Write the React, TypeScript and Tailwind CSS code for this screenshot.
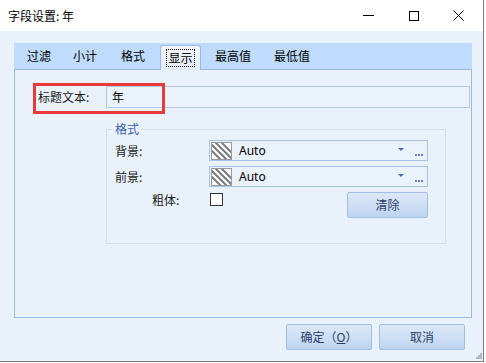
import React from 'react';

const font = { fontFamily: '"Noto Sans CJK SC", "Noto Sans", sans-serif' };

function Swatch() {
  return (
    <svg width="21" height="18" viewBox="0 0 21 18" className="shrink-0">
      <defs>
        <clipPath id="sw">
          <rect x="1" y="1" width="19" height="16" />
        </clipPath>
      </defs>
      <rect x="0.5" y="0.5" width="20" height="17" fill="#fff" stroke="#9a9a9a" />
      <g clipPath="url(#sw)" stroke="#7a7a7a" strokeWidth="2">
        <line x1="-8" y1="0" x2="10" y2="18" />
        <line x1="-2" y1="0" x2="16" y2="18" />
        <line x1="4" y1="0" x2="22" y2="18" />
        <line x1="10" y1="0" x2="28" y2="18" />
      </g>
    </svg>
  );
}

function ColorCombo() {
  return (
    <div className="w-[219px] h-[21px] border border-[#a9c3e8] bg-[#eaf2fb] flex items-center pl-[1px] pr-[4px]">
      <Swatch />
      <span className="ml-[7px] text-[12px] text-black leading-none" style={{ fontFamily: '"Noto Sans", sans-serif' }}>
        Auto
      </span>
      <svg width="6" height="3" viewBox="0 0 6 3" className="ml-auto mr-[11px] mb-[3px]">
        <path d="M0 0h6L3 3z" fill="#4d6ea8" />
      </svg>
      <div className="flex gap-[1px] self-end mb-[4px]">
        <span className="w-[2px] h-[2px] bg-[#6b7fc0]" />
        <span className="w-[2px] h-[2px] bg-[#6b7fc0]" />
        <span className="w-[2px] h-[2px] bg-[#6b7fc0]" />
      </div>
    </div>
  );
}

function Button({ children, className = '' }: { children: React.ReactNode; className?: string }) {
  return (
    <div
      className={`h-[26px] border border-[#a3bfe6] rounded-[2px] bg-gradient-to-b from-[#dbe8f8] via-[#cfe0f5] to-[#bcd3f0] flex items-center justify-center text-[12px] text-[#2b3f6b] ${className}`}
    >
      {children}
    </div>
  );
}

const tabs = [
  { label: '过滤', w: 'w-[46px]' },
  { label: '小计', w: 'w-[46px]' },
  { label: '格式', w: 'w-[50px]' },
];
const tabsAfter = [
  { label: '最高值', w: 'w-[64px]' },
  { label: '最低值', w: 'w-[54px]' },
];

export default function App() {
  return (
    <div className="w-[486px] h-[363px] bg-white relative overflow-hidden" style={font}>
      <div className="w-[484px] h-[362px] border-r border-b border-[#7f7f7f] flex flex-col">
        {/* title bar */}
        <div className="h-[31px] bg-white flex items-center pl-[8px] shrink-0">
          <span className="text-[12px] text-black">字段设置: 年</span>
          <div className="ml-auto flex items-center mr-[2px]">
            <div className="w-[45px] h-[31px] flex items-center justify-center">
              <span className="block w-[11px] h-px bg-black" />
            </div>
            <div className="w-[45px] h-[31px] flex items-center justify-center">
              <span className="block w-[10px] h-[10px] border border-black" />
            </div>
            <div className="w-[45px] h-[31px] flex items-center justify-center">
              <svg width="11" height="11" viewBox="0 0 11 11">
                <path d="M0.5 0.5l10 10M10.5 0.5l-10 10" stroke="#000" strokeWidth="1" />
              </svg>
            </div>
          </div>
        </div>

        {/* body */}
        <div className="flex-1 bg-[#e9f1fb] pt-[12px] pl-[14px] pr-[11px] relative">
          {/* tab strip */}
          <div className="h-[26px] bg-[#bfdbfe] flex items-end pl-[2px] text-[12px] text-black">
            {tabs.map((t) => (
              <div key={t.label} className={`${t.w} h-[26px] flex items-center justify-center`}>
                {t.label}
              </div>
            ))}
            <div className="w-[2px]" />
            <div className="w-[41px] h-[25px] -mb-px relative z-10 border border-b-0 border-[#9cb8e4] rounded-t-[3px] bg-gradient-to-b from-[#f3f6fb] to-[#e4ecf7] flex items-center justify-center">
              <span className="border border-dotted border-black px-[1px] leading-[16px]">显示</span>
            </div>
            {tabsAfter.map((t) => (
              <div key={t.label} className={`${t.w} h-[26px] flex items-center justify-center`}>
                {t.label}
              </div>
            ))}
          </div>

          {/* tab panel */}
          <div className="h-[249px] border border-[#99b9e8] bg-[#e9f1fb] text-[12px] text-[#1a1a1a]">
            <div className="flex items-center mt-[16px] ml-[23px]">
              <span className="w-[68px]">标题文本:</span>
              <div className="w-[364px] h-[22px] border border-[#b3c8e6] bg-[#eaf2fb] flex items-center pl-[5px] text-black">
                年
              </div>
            </div>

            <div className="relative ml-[91px] mt-[21px] w-[340px] h-[115px] border border-[#d6dde6] pt-[10px] pl-[8px]">
              <span className="absolute left-[6px] -top-[9px] px-[2px] bg-[#e9f1fb] text-[#3b5ea6] leading-[16px]">
                格式
              </span>
              <div className="flex items-center">
                <span className="w-[94px]">背景:</span>
                <ColorCombo />
              </div>
              <div className="flex items-center mt-[5px]">
                <span className="w-[94px]">前景:</span>
                <ColorCombo />
              </div>
              <div className="flex items-start mt-[5px] w-[313px]">
                <span className="w-[95px] pl-[37px] leading-[16px]">粗体:</span>
                <span className="block w-[13px] h-[13px] border border-[#333] bg-white mt-[1px]" />
                <Button className="ml-auto w-[81px]">清除</Button>
              </div>
            </div>
          </div>

          {/* footer */}
          <div className="flex justify-end gap-[7px] mt-[6px] mr-[7px]">
            <Button className="w-[86px]">
              确定（<span className="underline">O</span>）
            </Button>
            <Button className="w-[86px]">取消</Button>
          </div>

          {/* resize grip */}
          <svg width="6" height="6" viewBox="0 0 6 6" className="absolute right-[1px] bottom-[2px]">
            <rect x="4" y="0" width="2" height="2" fill="#b0b8c4" />
            <rect x="2" y="2" width="2" height="2" fill="#b0b8c4" />
            <rect x="4" y="2" width="2" height="2" fill="#b0b8c4" />
            <rect x="0" y="4" width="2" height="2" fill="#b0b8c4" />
            <rect x="2" y="4" width="2" height="2" fill="#b0b8c4" />
            <rect x="4" y="4" width="2" height="2" fill="#b0b8c4" />
          </svg>
        </div>
      </div>

      {/* red annotation box */}
      <div className="absolute left-[33px] top-[83px] w-[132px] h-[31px] border-[3px] border-[#e8393b]" />
    </div>
  );
}
